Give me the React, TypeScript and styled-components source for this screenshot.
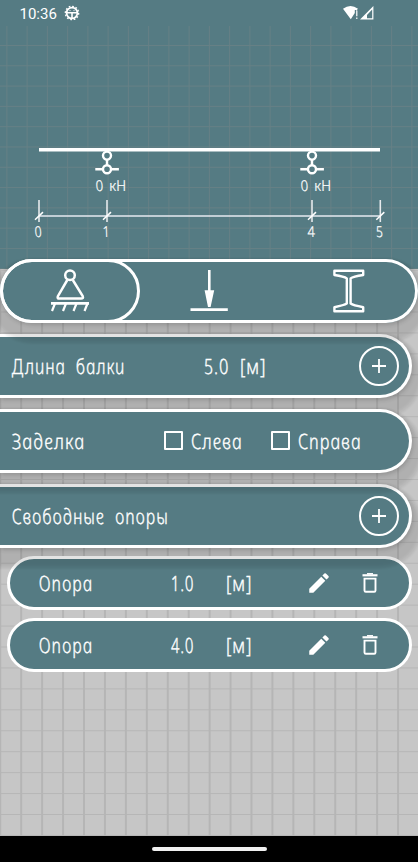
import React, { useLayoutEffect, useRef, useState } from "react";
import styled, { createGlobalStyle } from "styled-components";
import { MdEdit } from "react-icons/md";

const TEAL = "#557b83";
const LETTERING = '"Noto Sans", sans-serif';

const GlobalStyle = createGlobalStyle`
  * { box-sizing: border-box; }
  body { margin: 0; background: #c6c6c6; }
`;

const Screen = styled.div`
  width: 418px;
  height: 862px;
  overflow: hidden;
  display: flex;
  flex-direction: column;
  color: #fff;
  background-color: #c6c6c6;
  background-image:
    linear-gradient(90deg, #b5b5b5 1.5px, transparent 1.5px),
    linear-gradient(180deg, #b6b6b6 1.2px, transparent 1.2px);
  background-size: 20.95px 20.95px;
  background-position: 20.2px 18.4px;
`;

const Header = styled.header`
  flex: none;
  height: 269px;
  background: ${TEAL};
`;

const StatusBar = styled.div`
  height: 26px;
  padding: 0 44px 0 19.5px;
  display: flex;
  align-items: center;
  font: 400 15px/26px Roboto, sans-serif;

  svg { display: block; }
`;

const Clock = styled.span`
  width: 44px;
  padding-top: 1px;
`;

const Signals = styled.div`
  margin-left: auto;
`;

const Drawing = styled.div`
  height: 243px;
  background-image:
    linear-gradient(90deg, #668085 1.2px, transparent 1.2px),
    linear-gradient(180deg, #668085 1.2px, transparent 1.2px);
  background-size: 20.25px 20.3px;
  background-position: 6.4px 19px;

  svg { display: block; }
  text {
    font: italic 300 15px ${LETTERING};
    fill: #fff;
    stroke: #fff;
    stroke-width: 0.2px;
  }
`;

const Content = styled.main`
  flex: 1;
  margin-top: -10px;
  display: flex;
  flex-direction: column;
`;

const CAST = "0 10px 2px 11px rgba(0, 0, 0, 0.055), 0 10px 3px 8px rgba(0, 0, 0, 0.055), 1px 2px 4px rgba(0, 0, 0, 0.16)";

const Segmented = styled.div`
  position: relative;
  z-index: 4;
  height: 64px;
  border-radius: 32px;
  background: ${TEAL};
  box-shadow: inset 0 0 0 3px #fff, ${CAST};
  display: grid;
  grid-template-columns: 139.5px 139px 139.5px;
`;

const Segment = styled.button<{ $active?: boolean }>`
  border: ${(p) => (p.$active ? "3px solid #fff" : "3px solid transparent")};
  border-radius: 32px;
  background: transparent;
  padding: 0;
  display: flex;
  align-items: center;
  justify-content: center;
  color: #fff;
`;

const Panel = styled.section<{ $z: number; $columns: string }>`
  position: relative;
  z-index: ${(p) => p.$z};
  height: 64px;
  width: 412px;
  margin-top: 11px;
  padding: 0 9px 0 12px;
  border: 3px solid #fff;
  border-left: 0;
  border-radius: 0 32px 32px 0;
  background: ${TEAL};
  box-shadow: ${CAST};
  display: grid;
  grid-template-columns: ${(p) => p.$columns};
  align-items: center;
`;

const SupportList = styled.div`
  margin: 8px 6px 0 7px;
  display: flex;
  flex-direction: column;
  gap: 8px;
`;

const SupportRow = styled.div`
  height: 54px;
  padding-left: 29px;
  border: 3px solid #fff;
  border-radius: 27px;
  background: ${TEAL};
  display: grid;
  grid-template-columns: 132px 55px 79.5px 51px 30px;
  align-items: center;
`;

const AddButton = styled.button`
  width: 40px;
  height: 40px;
  padding: 0;
  border: 2px solid #fff;
  border-radius: 50%;
  background: transparent;
  display: grid;
  place-items: center;
`;

const IconButton = styled.button`
  width: 26px;
  height: 26px;
  padding: 0;
  border: 0;
  background: transparent;
  color: #fff;
  display: grid;
  place-items: center;
`;

const Option = styled.label`
  display: flex;
  align-items: center;
  gap: 8px;
`;

const Box = styled.span`
  flex: none;
  width: 19px;
  height: 19px;
  border: 2px solid #fff;
  border-radius: 1px;
  position: relative;
  top: -1px;
`;

const LabelBox = styled.span<{ $width: number }>`
  display: block;
  width: ${(p) => p.$width}px;
  height: 28px;
  white-space: nowrap;
`;

const Lettering = styled.span`
  display: inline-block;
  font: italic 300 21px/28px ${LETTERING};
  -webkit-text-stroke: 0.35px #fff;
  word-spacing: 6px;
  letter-spacing: 1.2px;
  transform-origin: 0 21px;
`;

function Label({ width, children }: { width: number; children: string }) {
  const ref = useRef<HTMLSpanElement>(null);
  const [scale, setScale] = useState(0.8);
  useLayoutEffect(() => {
    if (ref.current) setScale((width - 1) / (ref.current.offsetWidth - 2));
  }, [width, children]);
  return (
    <LabelBox $width={width}>
      <Lettering ref={ref} style={{ transform: `translateX(0.7px) scaleX(${scale}) skewX(12deg)` }}>
        {children}
      </Lettering>
    </LabelBox>
  );
}

const NavBar = styled.footer`
  flex: none;
  height: 26px;
  background: #000;
  display: flex;
  justify-content: center;
  align-items: center;
`;

const HomeHandle = styled.div`
  width: 115px;
  height: 4px;
  border-radius: 2px;
  background: #f0f0f0;
`;

function SettingsIcon() {
  return (
    <svg width="16" height="16" viewBox="0 0 16 16" fill="none" stroke="#fff">
      <circle cx="8" cy="8" r="5.4" strokeWidth="1.8" />
      <circle cx="8" cy="8" r="6.7" strokeWidth="1.3" strokeDasharray="1.75 1.75" />
      <path d="M3 7.7h10M8 8v5" strokeWidth="1.6" />
      <path d="M5.5 5.6h1M9.5 5.6h1" strokeWidth="1" />
    </svg>
  );
}

function ReceptionIcon() {
  return (
    <svg width="31" height="14" viewBox="0 0 31 14" fill="#fff">
      <path d="M0 2.8Q7.5-2.8 15 2.8L13 5V4h-1.2v3L7.8 13.2Z" />
      <path d="M13.2 4.5h1.2v5.8h-1.2zM13.2 11.4h1.2v1.6h-1.2z" />
      <path d="M30.4 0v13.4H17zM29.2 3.6 24 9v3.2h5.2z" fillRule="evenodd" />
    </svg>
  );
}

function DraftText({ x, y, width, children }: { x: number; y: number; width: number; children: string }) {
  return (
    <g transform={`translate(${x} ${y}) skewX(12)`}>
      <text textLength={width} lengthAdjust="spacingAndGlyphs">
        {children}
      </text>
    </g>
  );
}

function Support({ x }: { x: number }) {
  return (
    <g stroke="#fff" strokeWidth="2.4" fill={TEAL}>
      <path d={`M${x - 11.7} 143.3h23.6M${x} 130v12`} />
      <circle cx={x} cy="129.6" r="4" />
      <circle cx={x} cy="143.2" r="4" />
    </g>
  );
}

function BeamDrawing() {
  const marks = [
    { x: 39, label: "0", w: 7 },
    { x: 107, label: "1", w: 7 },
    { x: 312, label: "4", w: 7.5 },
    { x: 380.3, label: "5", w: 7 },
  ];
  return (
    <svg width="418" height="243" viewBox="0 0 418 243">
      <Support x={107} />
      <Support x={312} />
      <path d="M39 123.7H380" stroke="#fff" strokeWidth="3.5" />
      {[97, 302].map((x) => (
        <g key={x}>
          <DraftText x={x - 0.5} y={165} width={7.5}>0</DraftText>
          <DraftText x={x + 13} y={165} width={17}>кН</DraftText>
        </g>
      ))}
      <path d="M39 190H380" stroke="#e6eaf0" strokeWidth="1.7" />
      {marks.map((m) => (
        <g key={m.label}>
          <path d={`M${m.x} 174v22`} stroke="#e6eaec" strokeWidth="1.6" />
          <path d={`M${m.x - 4} 193.7l8-7.6`} stroke="#fff" strokeWidth="1.5" />
          <DraftText x={m.x - m.w / 2} y={211.2} width={m.w}>{m.label}</DraftText>
        </g>
      ))}
    </svg>
  );
}

function SupportIcon() {
  return (
    <svg width="40" height="44" viewBox="0 0 40 44" fill="none" stroke="#fff" strokeWidth="2.5">
      <circle cx="20" cy="6.3" r="4.8" />
      <path d="M17.3 11 7.9 27.2Q7 29.6 9.3 29.6H31Q33.8 29.6 32.7 27.2L22.8 11" />
      <path d="M1 34.4h38" strokeWidth="2.8" />
      <path d="M5 34.5 2 42M16 34.5 13 42M26.5 34.5 23.5 42M37.5 34.5 34.5 42" strokeWidth="2.2" />
    </svg>
  );
}

function LoadIcon() {
  return (
    <svg width="40" height="44" viewBox="0 0 40 44" fill="#fff">
      <path d="M19 1h2.6v20.2h3.6L21.6 38h-2.6L15.6 21.2H19z" />
      <path d="M1.5 39.2h37.3v2.8H1.5z" />
    </svg>
  );
}

function ProfileIcon() {
  return (
    <svg width="40" height="44" viewBox="0 0 40 44" fill="none" stroke="#fff" strokeWidth="2.4" strokeLinejoin="round">
      <path d="M6.4 1.8h28.8v4.2q-10.2 1.5-12.6 3.4v25.2q2.4 1.7 12.6 3.6v4H6.4v-4q9.8-1.9 12.4-3.6V9.4Q16.2 7.5 6.4 6z" />
    </svg>
  );
}

function TrashIcon() {
  return (
    <svg width="16" height="20" viewBox="0 0 16 20" fill="none" stroke="#fff">
      <path d="M0.5 2.3h15" strokeWidth="2.2" />
      <path d="M5 .8h6" strokeWidth="1.5" />
      <path d="M2.5 5.6h11v11.8q0 1.3-1.3 1.3H3.8q-1.3 0-1.3-1.3z" strokeWidth="1.9" />
    </svg>
  );
}

function Plus() {
  return (
    <svg width="14" height="14" viewBox="0 0 14 14" stroke="#fff" strokeWidth="1.8">
      <path d="M7 0v14M0 7h14" />
    </svg>
  );
}

function SupportItem({ position }: { position: string }) {
  return (
    <SupportRow>
      <Label width={54}>Опора</Label>
      <Label width={23}>{position}</Label>
      <Label width={26}>[м]</Label>
      <IconButton aria-label="Изменить"><MdEdit size={26} /></IconButton>
      <IconButton aria-label="Удалить"><TrashIcon /></IconButton>
    </SupportRow>
  );
}

export default function App() {
  return (
    <Screen>
      <GlobalStyle />
      <Header>
        <StatusBar>
          <Clock>10:36</Clock>
          <SettingsIcon />
          <Signals><ReceptionIcon /></Signals>
        </StatusBar>
        <Drawing><BeamDrawing /></Drawing>
      </Header>
      <Content>
        <Segmented>
          <Segment $active><SupportIcon /></Segment>
          <Segment><LoadIcon /></Segment>
          <Segment><ProfileIcon /></Segment>
        </Segmented>
        <Panel $z={1} $columns="192px 36px 119px 40px">
          <Label width={113}>Длина балки</Label>
          <Label width={25}>5.0</Label>
          <Label width={26}>[м]</Label>
          <AddButton aria-label="Добавить"><Plus /></AddButton>
        </Panel>
        <Panel $z={3} $columns="152px 107px 1fr">
          <Label width={73}>Заделка</Label>
          <Option><Box /><Label width={51}>Слева</Label></Option>
          <Option><Box /><Label width={63}>Справа</Label></Option>
        </Panel>
        <Panel $z={2} $columns="347px 40px">
          <Label width={156}>Свободные опоры</Label>
          <AddButton aria-label="Добавить"><Plus /></AddButton>
        </Panel>
        <SupportList>
          <SupportItem position="1.0" />
          <SupportItem position="4.0" />
        </SupportList>
      </Content>
      <NavBar><HomeHandle /></NavBar>
    </Screen>
  );
}
